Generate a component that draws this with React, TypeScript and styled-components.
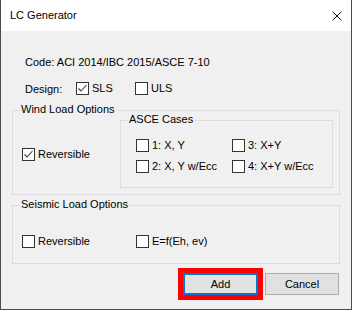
import React from "react";
import styled, { createGlobalStyle } from "styled-components";

const GlobalStyle = createGlobalStyle`
    html, body {
        margin: 0;
        padding: 0;
        background: #ffffff;
    }
    body {
        font-family: "Liberation Sans", Arial, sans-serif;
        font-size: 11px;
        color: #000000;
    }
`;

const CheckMark = () => (
    <svg width="11" height="11" viewBox="0 0 11 11">
        <polyline
            points="1.5,5.5 4,8 9.5,2"
            fill="none"
            stroke="#3c3c3c"
            strokeWidth="1.1"
        />
    </svg>
);

const CloseIcon = () => (
    <svg width="10" height="10" viewBox="0 0 10 10">
        <line x1="0.5" y1="0.5" x2="9.5" y2="9.5" stroke="#111" strokeWidth="1" />
        <line x1="9.5" y1="0.5" x2="0.5" y2="9.5" stroke="#111" strokeWidth="1" />
    </svg>
);

type CheckProps = {
    label: string;
    checked?: boolean;
};

const Check = ({ label, checked }: CheckProps) => (
    <SCheck>
        <SBox>{checked ? <CheckMark /> : null}</SBox>
        <span>{label}</span>
    </SCheck>
);

const App = () => {
    return (
        <>
            <GlobalStyle />
            <SWindow>
                <STitleBar>
                    <span>LC Generator</span>
                    <CloseIcon />
                </STitleBar>
                <SBody>
                    <SCodeLine>Code: ACI 2014/IBC 2015/ASCE 7-10</SCodeLine>
                    <SDesignRow>
                        <SDesignLabel>Design:</SDesignLabel>
                        <SDesignItem>
                            <Check label="SLS" checked />
                        </SDesignItem>
                        <Check label="ULS" />
                    </SDesignRow>

                    <SWindGroup>
                        <SGroupLabel>Wind Load Options</SGroupLabel>
                        <Check label="Reversible" checked />
                        <SAsceGroup>
                            <SGroupLabel>ASCE Cases</SGroupLabel>
                            <Check label="1: X, Y" />
                            <Check label="3: X+Y" />
                            <Check label="2: X, Y w/Ecc" />
                            <Check label="4: X+Y w/Ecc" />
                        </SAsceGroup>
                    </SWindGroup>

                    <SSeismicGroup>
                        <SGroupLabel>Seismic Load Options</SGroupLabel>
                        <Check label="Reversible" />
                        <Check label="E=f(Eh, ev)" />
                    </SSeismicGroup>

                    <SActions>
                        <SButton $width={75} $focused>
                            Add
                        </SButton>
                        <SButton $width={74}>Cancel</SButton>
                    </SActions>
                </SBody>
            </SWindow>
        </>
    );
};

const SWindow = styled.div`
    width: 352px;
    height: 310px;
    box-sizing: border-box;
    border: 1px solid #4a4a4a;
    border-top: none;
    background: #f0f0f0;
    display: flex;
    flex-direction: column;
`;

const STitleBar = styled.div`
    height: 31px;
    flex-shrink: 0;
    background: #ffffff;
    display: flex;
    align-items: center;
    justify-content: space-between;
    padding: 0 9px 0 9px;
    line-height: 15px;
`;

const SBody = styled.div`
    flex: 1;
    display: flex;
    flex-direction: column;
    padding: 24px 11px 14px 11px;
`;

const SCodeLine = styled.div`
    line-height: 15px;
    margin-left: 13px;
`;

const SDesignRow = styled.div`
    margin-top: 11px;
    height: 15px;
    padding-left: 13px;
    display: flex;
    align-items: center;
`;

const SDesignLabel = styled.span`
    width: 51px;
`;

const SDesignItem = styled.div`
    width: 59px;
`;

const SCheck = styled.div`
    display: flex;
    align-items: center;
    gap: 3px;
    height: 13px;
    line-height: 15px;
    white-space: nowrap;
`;

const SBox = styled.div`
    width: 13px;
    height: 13px;
    box-sizing: border-box;
    border: 1px solid #333333;
    background: #ffffff;
    display: flex;
    align-items: center;
    justify-content: center;
`;

const SGroup = styled.div`
    position: relative;
    border: 1px solid #dcdcdc;
`;

const SGroupLabel = styled.span`
    position: absolute;
    top: -9px;
    left: 7px;
    padding: 0 1px;
    line-height: 15px;
    background: #f0f0f0;
`;

const SWindGroup = styled(SGroup)`
    margin-top: 14px;
    padding: 9px 6px 6px 9px;
    display: flex;
    align-items: center;
    justify-content: space-between;
`;

const SAsceGroup = styled(SGroup)`
    width: 213px;
    box-sizing: border-box;
    padding: 18px 0 14px 15px;
    display: grid;
    grid-template-columns: 96px auto;
    row-gap: 8px;
`;

const SSeismicGroup = styled(SGroup)`
    margin-top: 10px;
    padding: 29px 0 15px 9px;
    display: grid;
    grid-template-columns: 114px auto;
`;

const SActions = styled.div`
    margin-top: 9px;
    padding-right: 1px;
    display: flex;
    justify-content: flex-end;
    gap: 7px;
`;

const SButton = styled.button<{ $width: number; $focused?: boolean }>`
    width: ${(p) => p.$width}px;
    height: 22px;
    box-sizing: border-box;
    padding: 0;
    font-family: "Liberation Sans", Arial, sans-serif;
    font-size: 11px;
    color: #000000;
    background: #e1e1e1;
    border: ${(p) => (p.$focused ? "2px solid #0078d7" : "1px solid #adadad")};
    outline: ${(p) => (p.$focused ? "5px solid #ff0000" : "none")};
`;

export default App;
